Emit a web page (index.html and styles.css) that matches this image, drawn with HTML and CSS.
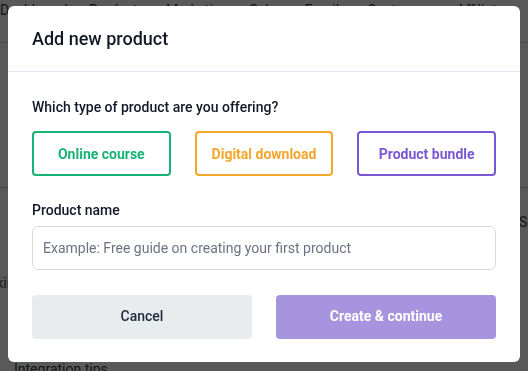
FILE: index.html
```html
<!DOCTYPE html>
<html lang="en">
<head>
<meta charset="utf-8">
<title>Add new product</title>
<link rel="stylesheet" href="styles.css">
</head>
<body>
<div class="page">
  <nav class="nav">
    <span>Dashboard</span>
    <span>Products</span>
    <span>Marketing</span>
    <span>Sales</span>
    <span>Emails</span>
    <span>Customers</span>
    <span>Affiliates</span>
  </nav>
  <section class="hero">
    <div class="hero-row"></div>
  </section>
  <section class="content">
    <div class="row-right">Settings</div>
    <div class="row-left">Tracking</div>
    <div class="row-bottom">Integration tips</div>
  </section>
</div>
<div class="overlay"></div>
<div class="modal" role="dialog">
  <header class="modal-header">
    <h2 class="modal-title">Add new product</h2>
  </header>
  <div class="modal-body">
    <p class="question">Which type of product are you offering?</p>
    <div class="types">
      <button class="type type-green">Online course</button>
      <button class="type type-orange">Digital download</button>
      <button class="type type-purple">Product bundle</button>
    </div>
    <label class="label" for="pname">Product name</label>
    <input id="pname" class="input" type="text" placeholder="Example: Free guide on creating your first product">
    <div class="actions">
      <button class="btn btn-cancel">Cancel</button>
      <button class="btn btn-create">Create &amp; continue</button>
    </div>
  </div>
</div>
</body>
</html>
```
FILE: styles.css
```css
* { box-sizing: border-box; }
html, body { margin: 0; padding: 0; }
body {
  width: 528px;
  height: 371px;
  overflow: hidden;
  background: #ffffff;
  font-family: Roboto, "Liberation Sans", sans-serif;
  color: #1f2937;
}
.page { width: 528px; height: 371px; overflow: hidden; }
.nav {
  height: 43px;
  display: flex;
  gap: 21px;
  padding: 1px 0 0 0;
  font-size: 14px;
  line-height: 18px;
  color: #374151;
  border-bottom: 1px solid #d1d5db;
  white-space: nowrap;
}
.hero { height: 145px; border-bottom: 1px solid #d1d5db; }
.content { height: 183px; font-size: 14px; color: #374151; overflow: hidden; }
.row-right { padding: 26px 0 0 519px; white-space: nowrap; }
.row-left { padding: 45px 0 0 0; margin-left: -31px; white-space: nowrap; }
.row-bottom { padding: 70px 0 0 14px; white-space: nowrap; }

.overlay {
  position: fixed;
  inset: 0;
  background: rgba(0, 0, 0, 0.65);
}
.modal {
  position: fixed;
  left: 8px;
  top: 6px;
  width: 512px;
  height: 356px;
  background: #ffffff;
  border-radius: 6px;
  overflow: hidden;
}
.modal-header {
  padding: 20px 24px 19px;
  border-bottom: 1px solid #e2e8f0;
}
.modal-title {
  margin: 0;
  font-size: 18px;
  line-height: 26px;
  font-weight: 500;
  color: #111827;
}
.modal-body {
  padding: 25px 24px 24px;
  display: flex;
  flex-direction: column;
}
.question {
  margin: 0 0 14px;
  font-size: 14px;
  line-height: 20px;
  font-weight: 500;
  color: #111827;
}
.types {
  display: grid;
  grid-template-columns: repeat(3, 1fr);
  gap: 24px;
}
.type {
  height: 45px;
  background: #ffffff;
  border: 2px solid;
  border-radius: 4px;
  font-family: Roboto, "Liberation Sans", sans-serif;
  font-size: 14px;
  font-weight: 700;
  padding: 0;
}
.type-green { border-color: #17b374; color: #17b374; }
.type-orange { border-color: #f4a52a; color: #f4a52a; }
.type-purple { border-color: #7a58d4; color: #7a58d4; }
.label {
  margin-top: 24px;
  font-size: 14px;
  line-height: 20px;
  font-weight: 500;
  color: #111827;
}
.input {
  margin-top: 6px;
  height: 44px;
  border: 1px solid #d6d9de;
  border-radius: 6px;
  padding: 0 10px;
  font-family: Roboto, "Liberation Sans", sans-serif;
  font-size: 14px;
  color: #111827;
}
.input::placeholder { color: #6b7280; }
.actions {
  margin-top: 25px;
  display: grid;
  grid-template-columns: 1fr 1fr;
  gap: 24px;
}
.btn {
  height: 44px;
  border: 0;
  border-radius: 4px;
  font-family: Roboto, "Liberation Sans", sans-serif;
  font-size: 14px;
  padding: 0 0 2px;
}
.btn-cancel { background: #e9ecef; color: #1f2937; font-weight: 500; }
.btn-create { background: #a694df; color: #ffffff; font-weight: 700; }
```
